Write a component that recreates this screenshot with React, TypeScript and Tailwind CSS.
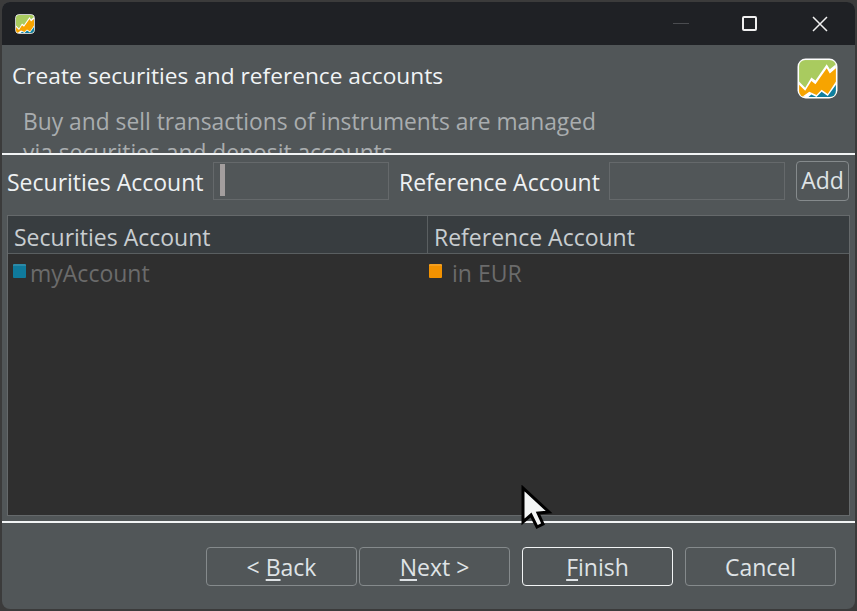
function Logo({ size }: { size: number }) {
  return (
    <svg width={size} height={size} viewBox="0 0 40 40" className="block">
      <defs>
        <clipPath id={`c${size}`}>
          <rect x="2" y="2" width="36" height="36" rx="6" />
        </clipPath>
      </defs>
      <rect x="0.5" y="0.5" width="39" height="39" rx="8" fill="#ffffff" />
      <g clipPath={`url(#c${size})`}>
        <rect x="2" y="2" width="36" height="36" fill="#a9cb5f" />
        <path d="M2 23 L8 29 L14 19 L18 22 L29 6 L32 11 L38 6 V40 H2 Z" fill="#ffffff" />
        <path d="M2 26 L8 32 L14 22.500 L18 25.500 L29 10 L32 15 L38 10 V40 H2 Z" fill="#f7a400" />
        <path d="M2 40 L12 33 L19 36 L24 31 L30 35 L38 23 V40 Z" fill="#ffffff" />
        <path d="M9 40 L14 35.500 L19 38 L24 33 L30 37 L38 26 V40 Z" fill="#0f7f9f" />
      </g>
    </svg>
  );
}

function Btn({ children, className }: { children: React.ReactNode; className?: string }) {
  return (
    <div className={`flex items-center justify-center rounded-[4px] border border-[#858a8c] text-[#dfe3e6] text-[23px] leading-none ${className ?? ""}`}>
      {children}
    </div>
  );
}

function Book({ color }: { color: string }) {
  return (
    <div className="w-[13px] h-[14px] rounded-[1px] shrink-0" style={{ background: color, borderTop: "2px solid rgba(255,255,255,0.12)" }} />
  );
}

export default function App() {
  return (
    <div className="relative w-[857px] h-[611px] overflow-hidden bg-[#3b3b3b] font-['Open_Sans','Noto_Sans',sans-serif]">
      <div className="absolute inset-[2px] rounded-[8px] overflow-hidden flex flex-col bg-[#515658]">
        <div className="h-[43px] shrink-0 bg-[#1f2125] flex items-center pl-[13px] pr-[15px]">
          <Logo size={20} />
          <div className="flex-1" />
          <div className="w-[16px] h-px bg-[#4a4c50] mr-[53px]" />
          <div className="w-[15px] h-[15px] border-2 border-[#f0f0f0] rounded-[2px] mr-[55px]" />
          <svg width="16" height="16" viewBox="0 0 16 16" className="mr-[12px]">
            <path d="M1 1 L15 15 M15 1 L1 15" stroke="#f0f0f0" strokeWidth="1.5" />
          </svg>
        </div>

        <div className="h-[108px] shrink-0 relative overflow-hidden px-[10px] pt-[16px]">
          <div className="text-[22.7px] leading-[30px] text-[#f1f4f6]">Create securities and reference accounts</div>
          <div className="mt-[15px] ml-[11px] w-[585px] text-[22.8px] leading-[31px] text-[#a9adaf]">
            Buy and sell transactions of instruments are managed via securities and deposit accounts
          </div>
          <div className="absolute right-[17px] top-[13px]">
            <Logo size={41} />
          </div>
        </div>
        <div className="h-[2px] shrink-0 bg-[#f2f4f5]" />

        <div className="h-[46px] shrink-0 flex items-center pl-[5px] pr-[6px] pt-[5px]">
          <span className="text-[23px] leading-none pt-[4px] text-[#eef1f3] whitespace-nowrap w-[206px]">Securities Account</span>
          <div className="w-[176px] h-[38px] border border-[#65696b] relative">
            <div className="absolute left-[6px] top-px w-[5px] h-[32px] bg-[#a39e9e]" />
          </div>
          <span className="text-[23px] leading-none pt-[4px] text-[#eef1f3] whitespace-nowrap ml-[10px] w-[210px]">Reference Account</span>
          <div className="w-[176px] h-[38px] border border-[#65696b]" />
          <Btn className="w-[53px] h-[40px] ml-[11px]">Add</Btn>
        </div>

        <div className="mt-[14px] ml-[5px] w-[843px] h-[301px] shrink-0 border border-[#65696b] bg-[#2f2f2f] flex flex-col">
          <div className="h-[38px] shrink-0 bg-[#383d40] border-b border-[#5a5f61] flex text-[23px] text-[#c8cdd0]">
            <div className="w-[420px] border-r border-[#5a5f61] pl-[6px] pt-[5px] flex items-center">Securities Account</div>
            <div className="flex-1 pl-[6px] pt-[5px] flex items-center">Reference Account</div>
          </div>
          <div className="flex text-[23px] text-[#6b6b6b] h-[38px] items-center">
            <div className="w-[420px] flex items-center pl-[5px]">
              <div className="-mt-[4px]"><Book color="#0f7a9c" /></div>
              <span className="ml-[4px]">myAccount</span>
            </div>
            <div className="flex items-center pl-[1px]">
              <div className="-mt-[4px]"><Book color="#f39200" /></div>
              <span className="ml-[10px]">in EUR</span>
            </div>
          </div>
        </div>

        <div className="mt-[5px] h-[2px] shrink-0 bg-[#f2f4f5]" />

        <div className="flex-1 flex items-start pt-[24px] pl-[204px]">
          <Btn className="w-[151px] h-[39px] pt-[2px]"><span>&lt; <span className="underline underline-offset-[3px]">B</span>ack</span></Btn>
          <Btn className="w-[151px] h-[39px] pt-[2px] ml-[2px]"><span><span className="underline underline-offset-[3px]">N</span>ext &gt;</span></Btn>
          <Btn className="w-[151px] h-[39px] pt-[2px] ml-[12px] !border-[#f2f4f5]"><span><span className="underline underline-offset-[3px]">F</span>inish</span></Btn>
          <Btn className="w-[151px] h-[39px] pt-[2px] ml-[12px]">Cancel</Btn>
        </div>
      </div>

      <svg width="34" height="46" viewBox="0 0 34 46" className="absolute left-[520px] top-[485px]">
        <path d="M3 3 V37 L11 30 L17 42 L23 39 L18 28 L29 27 Z" fill="#f3f5f5" stroke="#000" strokeWidth="3" strokeLinejoin="miter" />
      </svg>
    </div>
  );
}
